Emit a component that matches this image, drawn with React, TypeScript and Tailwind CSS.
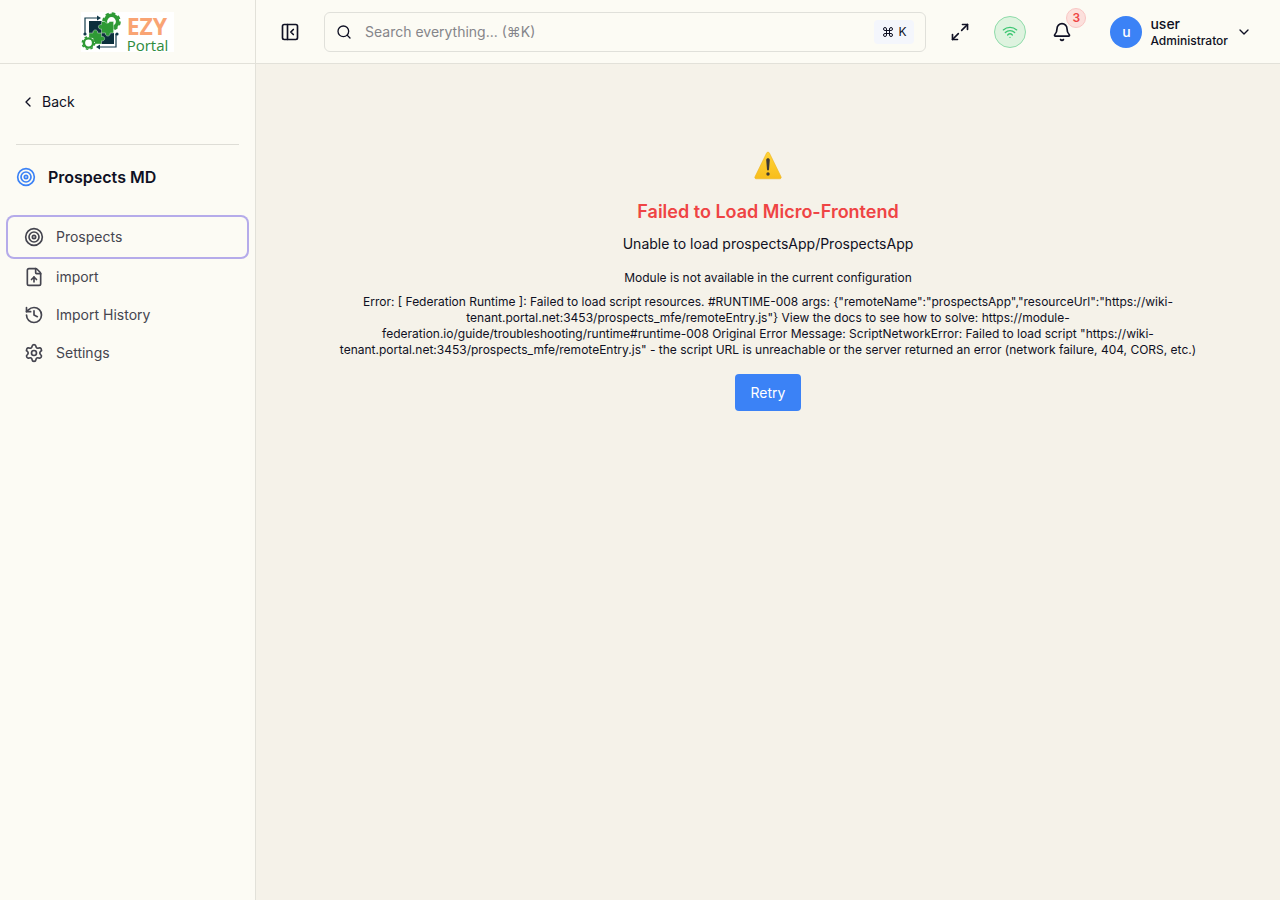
import React from "react";
import {
  Bell,
  ChevronDown,
  ChevronLeft,
  Command,
  FileUp,
  History,
  Maximize2,
  PanelLeftClose,
  Search,
  Settings,
  Target,
  Wifi,
} from "lucide-react";

const Logo: React.FunctionComponent = () => (
  <a href="#home" aria-label="EZY Portal" className="flex gap-1 h-10 font-['Open_Sans',sans-serif] bg-white">
    <svg viewBox="0 0 42 40" className="h-10 w-[42px]" aria-hidden="true">
      <g fill="none" stroke="#123a4a" strokeWidth="1.2">
        <path d="M4 21V6h13M35 22v13H18" />
      </g>
      <path fill="#123a4a" d="M16 3.6 20 6l-4 2.400zM19 32.6 15 35l4 2.400z" />
      <circle cx="4" cy="22" r="1.6" fill="#123a4a" />
      <circle cx="36" cy="22" r="1.6" fill="#123a4a" />
      <circle cx="30.5" cy="9.5" r="6.2" fill="none" stroke="#2e9a35" strokeWidth="3.6" />
      <circle cx="30.5" cy="9.5" r="8.4" fill="none" stroke="#2e9a35" strokeWidth="1.8" strokeDasharray="3.6 3" />
      <path fill="#0b2f3c" d="M8 9h13v12H8zM20 21h13v11H20z" />
      <path
        fill="#2e9a35"
        stroke="#fff"
        strokeWidth=".4"
        d="M20.5 9.5H24a2.4 2.400 0 0 0 4.600 0h4v11.500h-3.500a2.400 2.400 0 1 1-4.600 0h-4V17a2.300 2.300 0 1 1 0-4.300z"
      />
      <path
        fill="#2e9a35"
        stroke="#fff"
        strokeWidth=".4"
        d="M8 21h4a2.400 2.400 0 1 1 4.600 0h3.900v3.500a2.300 2.300 0 1 1 0 4.300v3.200H8z"
      />
      <circle cx="7.500" cy="31" r="6.5" fill="#fff" />
      <circle cx="7.500" cy="31" r="4.600" fill="none" stroke="#2e9a35" strokeWidth="2.400" />
      <circle cx="7.500" cy="31" r="6.2" fill="none" stroke="#2e9a35" strokeWidth="1.5" strokeDasharray="2.6 2.270" />
    </svg>
    <span className="flex flex-col pr-1.5">
      <span className="text-[23px] font-bold leading-[29px] text-[#f9a474]">EZY</span>
      <span className="text-[15px] leading-[8px] text-[#2e8b3d]">Portal</span>
    </span>
  </a>
);

const WarningSign: React.FunctionComponent = () => (
  <svg viewBox="0 0 32 32" className="size-8" role="img" aria-label="Warning">
    <defs>
      <linearGradient id="warning" x1="0" y1="0" x2="0" y2="1">
        <stop offset="0" stopColor="#ffd43a" />
        <stop offset="1" stopColor="#f8bd1b" />
      </linearGradient>
    </defs>
    <path
      d="M14.6 3c.7-1.200 2.100-1.200 2.800 0l11.600 23.700c.6 1.200-.1 2.100-1.400 2.100H4.400c-1.300 0-2-.9-1.400-2.100z"
      fill="url(#warning)"
      stroke="#efb31b"
      strokeWidth=".6"
    />
    <path d="M14.2 10c0-2.300 3.600-2.300 3.600 0l-.8 9.600c-.1 1.300-1.900 1.300-2 0z" fill="#3f3a34" />
    <circle cx="16" cy="24" r="1.7" fill="#3f3a34" />
  </svg>
);

const links = [
  { label: "Prospects", icon: Target, active: true },
  { label: "import", icon: FileUp, active: false },
  { label: "Import History", icon: History, active: false },
  { label: "Settings", icon: Settings, active: false },
];

const Sidebar: React.FunctionComponent = () => (
  <aside className="flex flex-col w-64 shrink-0 bg-[#fcfbf4] border-r border-[#e2e1d9]">
    <div className="flex justify-center items-center h-16 border-b border-[#e2e1d9]">
      <Logo />
    </div>
    <div className="px-4 pt-5">
      <button type="button" className="flex gap-1.5 items-center px-1 h-9 text-sm">
        <ChevronLeft size={16} />
        Back
      </button>
      <hr className="mt-6 border-[#deddd6]" />
      <h2 className="flex gap-3 items-center mt-5 h-6 text-base font-semibold">
        <Target size={20} className="text-[#3b82f6]" />
        Prospects MD
      </h2>
    </div>
    <nav className="px-2 mt-7">
      <ul className="flex flex-col">
        {links.map(({ label, icon: Icon, active }) => (
          <li key={label}>
            <a
              href="#"
              aria-current={active ? "page" : undefined}
              className={
                active
                  ? "flex gap-3 items-center px-4 mb-px h-10 text-sm text-[#45454f] rounded-md ring-2 ring-[#b5abea]"
                  : "flex gap-3 items-center px-4 h-[38px] text-sm text-[#45454f] rounded-md"
              }
            >
              <Icon size={20} />
              {label}
            </a>
          </li>
        ))}
      </ul>
    </nav>
  </aside>
);

const Header: React.FunctionComponent = () => (
  <header className="flex items-center pr-7 pl-6 h-16 bg-[#fcfbf4] border-b border-[#e2e1d9]">
    <button type="button" aria-label="Collapse sidebar" className="flex justify-center items-center w-5 h-8">
      <PanelLeftClose size={20} />
    </button>
    <label className="flex flex-1 gap-[13px] items-center px-[11px] ml-6 h-10 rounded-md border border-[#e0e0da]">
      <Search size={16} />
      <input
        type="text"
        aria-label="Search"
        placeholder="Search everything... (⌘K)"
        className="flex-1 min-w-0 text-sm bg-transparent outline-none placeholder:text-[#85858a]"
      />
      <kbd className="flex gap-1 items-center px-2 h-6 font-[Inter,sans-serif] text-xs bg-[#f4f6fc] rounded-sm">
        <Command size={12} />
        K
      </kbd>
    </label>
    <div className="flex items-center ml-6">
      <button type="button" aria-label="Full screen" className="flex justify-center items-center w-5 h-8">
        <Maximize2 size={20} />
      </button>
      <button
        type="button"
        aria-label="Connection status"
        className="flex justify-center items-center ml-6 text-[#3cc671] bg-[#def3df] rounded-full border border-[#8fdcaa] size-8"
      >
        <Wifi size={16} />
      </button>
      <button type="button" aria-label="Notifications" className="flex relative justify-center items-center ml-5 size-8">
        <Bell size={20} />
        <span className="flex absolute -top-2 -right-2 justify-center items-center text-xs font-semibold text-[#ef4444] bg-[#fce0dc] rounded-full border border-[#f9c6c4] size-5">
          3
        </span>
      </button>
      <button type="button" className="flex gap-2 items-center ml-8 text-left">
        <span className="flex justify-center items-center text-sm font-medium text-white bg-[#3b82f6] rounded-full size-8">
          u
        </span>
        <span className="flex flex-col font-medium">
          <span className="text-sm leading-[18px]">user</span>
          <span className="text-xs leading-4">Administrator</span>
        </span>
        <ChevronDown size={16} />
      </button>
    </div>
  </header>
);

const remoteEntry = "https://wiki-tenant.portal.net:3453/prospects_mfe/remoteEntry.js";

const errorMessage = [
  "Error: [ Federation Runtime ]: Failed to load script resources. #RUNTIME-008",
  `args: {"remoteName":"prospectsApp","resourceUrl":"${remoteEntry}"}`,
  "View the docs to see how to solve: https://module-federation.io/guide/troubleshooting/runtime#runtime-008",
  `Original Error Message: ScriptNetworkError: Failed to load script "${remoteEntry}"`,
  "- the script URL is unreachable or the server returned an error (network failure, 404, CORS, etc.)",
].join(" ");

const LoadError: React.FunctionComponent = () => (
  <section className="flex flex-col items-center px-20 pt-[86px] text-center">
    <WarningSign />
    <h1 className="mt-4 text-lg font-semibold text-[#ef4444]">Failed to Load Micro-Frontend</h1>
    <p className="mt-2 text-sm">Unable to load prospectsApp/ProspectsApp</p>
    <p className="mt-4 text-xs">Module is not available in the current configuration</p>
    <p className="mt-2 max-w-[864px] text-xs">{errorMessage}</p>
    <button type="button" className="px-4 mt-4 h-[37px] text-sm text-white bg-[#3b82f6] rounded-sm">
      Retry
    </button>
  </section>
);

const App: React.FunctionComponent = () => (
  <div className="flex min-h-screen font-[Inter,sans-serif] text-[#0f1023] bg-[#f5f2e9]">
    <Sidebar />
    <div className="flex flex-col flex-1 min-w-0">
      <Header />
      <main className="flex-1">
        <LoadError />
      </main>
    </div>
  </div>
);

export default App;
